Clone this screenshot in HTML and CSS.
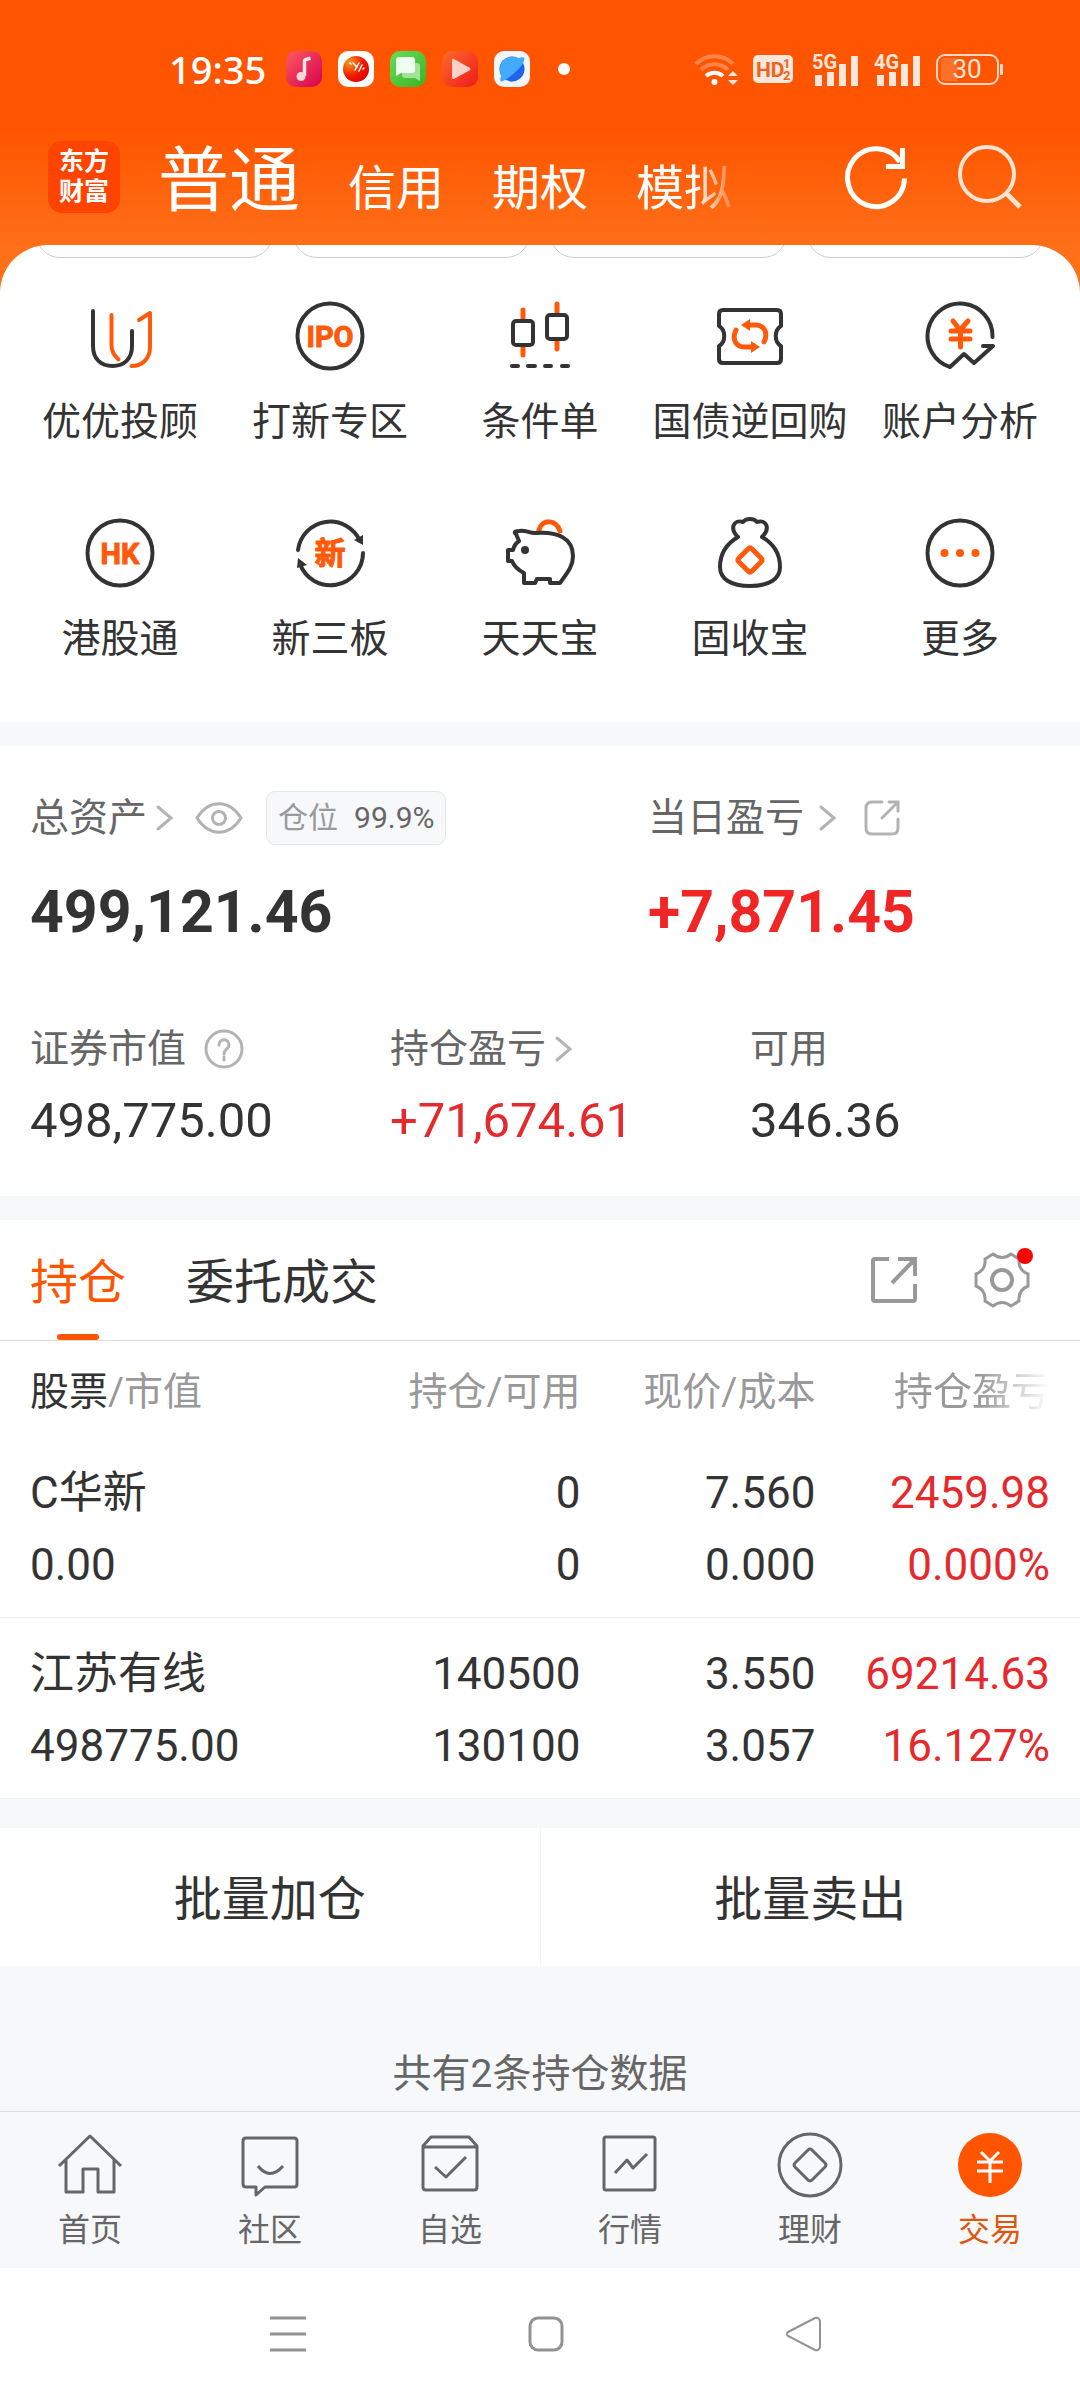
FILE: index.html
```html
<!DOCTYPE html>
<html lang="zh-CN">

<head>
    <meta charset="UTF-8" />
    <meta name="viewport" content="width=device-width, initial-scale=1" />
    <title>交易 - 东方财富</title>
    <link rel="stylesheet" href="styles.css">
</head>

<body>
    <header class="header">
        <div class="status-bar">
            <div class="status-left">
                <span class="clock">19:35</span>
                <svg class="app-icon" viewBox="0 0 36 36" aria-hidden="true">
                    <defs>
                        <linearGradient id="g-music" x1="0" y1="0" x2="1" y2="1"><stop offset="0" stop-color="#ff5a5f" /><stop offset="1" stop-color="#d4004f" /></linearGradient>
                        <radialGradient id="g-ball" cx=".25" cy=".25" r=".9"><stop offset="0" stop-color="#f39a1d" /><stop offset=".6" stop-color="#f01800" /><stop offset="1" stop-color="#e00000" /></radialGradient>
                        <linearGradient id="g-sms" x1="0" y1="0" x2="1" y2="1"><stop offset="0" stop-color="#66e056" /><stop offset="1" stop-color="#3cb125" /></linearGradient>
                        <linearGradient id="g-video" x1="0" y1="0" x2="1" y2="1"><stop offset="0" stop-color="#ff6a2c" /><stop offset="1" stop-color="#ee1a1a" /></linearGradient>
                    </defs>
                    <rect width="36" height="36" rx="10" fill="url(#g-music)" />
                    <path d="M18.500 25V10.500q0-2 2-2.300l4-.9" fill="none" stroke="#ffe3e6" stroke-width="3.500" />
                    <circle cx="15" cy="25.500" r="4.500" fill="#ffd5da" />
                </svg>
                <svg class="app-icon" viewBox="0 0 36 36" aria-hidden="true">
                    <rect width="36" height="36" rx="10" fill="#fff" />
                    <circle cx="18" cy="18" r="13" fill="url(#g-ball)" />
                    <path d="M12 12l1 1M15 12l4 4M17 19l4-7M21 20l3-6M25 18l1-1" stroke="#fff" stroke-width="1.500" stroke-linecap="round" />
                </svg>
                <svg class="app-icon" viewBox="0 0 36 36" aria-hidden="true">
                    <rect width="36" height="36" rx="10" fill="url(#g-sms)" />
                    <path d="M12 12h15q3 0 3 3v15l-5-3H15q-3 0-3-3z" fill="#a4e29a" />
                    <path d="M9 6h13q3 0 3 3v10q0 3-3 3H11l-5 3V9q0-3 3-3z" fill="#effff0" />
                </svg>
                <svg class="app-icon" viewBox="0 0 36 36" aria-hidden="true">
                    <rect width="36" height="36" rx="10" fill="url(#g-video)" />
                    <path d="M10 9.500q0-2.500 2.300-1.300l15.500 8.500q1.500 1.300 0 2.500l-15.500 8.500Q10 28.700 10 26z" fill="#ffd0c8" />
                </svg>
                <svg class="app-icon" viewBox="0 0 36 36" aria-hidden="true">
                    <rect width="36" height="36" rx="10" fill="#f2f6fb" />
                    <circle cx="18" cy="18" r="12.500" fill="#1f63ea" />
                    <path d="M9 26.500A12.500 12.500 0 0 1 24.500 7.300q5-2.300 6 .2-.5 6-9.500 14t-14 9q-2.500-1.500 2-8z" fill="#43aaff" />
                </svg>
                <span class="more-dot"></span>
            </div>
            <div class="status-right">
                <svg width="46" height="36" viewBox="0 0 46 36" fill="none" aria-hidden="true">
                    <path d="M2 13a26 26 0 0 1 37 0M7 19a19 19 0 0 1 27 0" stroke="#ff8447" stroke-width="4" />
                    <path d="M12 25a13 13 0 0 1 17 0" stroke="#fff" stroke-width="4" />
                    <circle cx="20.500" cy="31" r="3" fill="#fff" />
                    <path d="M34 25l5-5 5 5zM34 29l5 5 5-5z" fill="#ffe6da" />
                </svg>
                <svg class="hd-icon" width="40" height="30" viewBox="0 0 40 30" aria-hidden="true">
                    <rect y="1" width="40" height="28" rx="5" fill="#ffe6da" />
                    <text class="hd-text" x="3" y="23">HD</text>
                    <text class="hd-num" x="30" y="14">1</text>
                    <text class="hd-num" x="30" y="26">2</text>
                </svg>
                <svg width="46" height="36" viewBox="0 0 46 36" aria-hidden="true">
                    <text class="net-text" x="0" y="18">5G</text>
                    <path d="M3 24h7v11H3zM15 21h7v14h-7zM27 13h7v22h-7zM39 5h7v30h-7z" fill="#ffe6da" />
                </svg>
                <svg width="46" height="36" viewBox="0 0 46 36" aria-hidden="true">
                    <text class="net-text" x="0" y="18">4G</text>
                    <path d="M3 24h7v11H3zM15 21h7v14h-7zM27 13h7v22h-7zM39 5h7v30h-7z" fill="#ffe6da" />
                </svg>
                <svg width="68" height="36" viewBox="0 0 68 36" aria-hidden="true">
                    <rect x="1" y="4" width="61" height="29" rx="8" fill="none" stroke="#ffd8c4" stroke-width="2" />
                    <path d="M9 7h12v23H9q-4 0-4-4V11q0-4 4-4z" fill="#ff702a" />
                    <rect x="64" y="13" width="3" height="11" rx="1" fill="#ffd8c4" />
                    <text class="battery-text" x="31" y="27">30</text>
                </svg>
            </div>
        </div>

        <div class="title-bar">
            <div class="logo">东方<br>财富</div>
            <nav class="account-tabs">
                <a href="#" class="account-tab active">普通</a>
                <a href="#" class="account-tab">信用</a>
                <a href="#" class="account-tab">期权</a>
                <a href="#" class="account-tab fade">模拟</a>
            </nav>
            <div class="title-actions">
                <button class="icon-btn" aria-label="刷新">
                    <svg width="72" height="72" viewBox="0 0 72 72" fill="none" stroke="#fff" stroke-width="5">
                        <path d="M64.500 37.500A28.500 29 0 1 1 60 21" />
                        <path d="M46 25.500h16.500V7" />
                    </svg>
                </button>
                <button class="icon-btn" aria-label="搜索">
                    <svg width="72" height="72" viewBox="0 0 72 72" fill="none" stroke="#ffe3d3" stroke-width="4">
                        <circle cx="33" cy="33" r="27" />
                        <path d="M52 52l14 14" stroke-width="5" />
                    </svg>
                </button>
            </div>
        </div>
    </header>

    <main>
        <section class="shortcuts">
            <div class="pill-row"><span></span><span></span><span></span><span></span></div>
            <div class="shortcut-grid">
                <a href="#" class="shortcut">
                    <svg class="shortcut-icon" viewBox="0 0 72 72">
                        <path d="M9 11v35c0 13 8 20 19.500 20S48 59 48 46V31" />
                        <path class="hot" d="M27.500 15v30c0 7 3 11 7 14.500M55 20l11-7v34c0 12-8 19-18.500 19" />
                    </svg>
                    <span>优优投顾</span>
                </a>
                <a href="#" class="shortcut">
                    <svg class="shortcut-icon" viewBox="0 0 72 72">
                        <circle cx="36" cy="36" r="32.500" />
                        <text class="icon-text" x="36" y="47">IPO</text>
                    </svg>
                    <span>打新专区</span>
                </a>
                <a href="#" class="shortcut">
                    <svg class="shortcut-icon" viewBox="0 0 72 72">
                        <path class="hot" d="M19 10v8M19 48v7M53 4v8M53 42v7" stroke-width="5" />
                        <rect x="9" y="21" width="20" height="24" rx="3" />
                        <rect x="43" y="15" width="20" height="24" rx="3" />
                        <path d="M8 66h6M24 66h7M41 66h6M58 66h6" />
                    </svg>
                    <span>条件单</span>
                </a>
                <a href="#" class="shortcut">
                    <svg class="shortcut-icon" viewBox="0 0 72 72">
                        <path d="M9 10h54q4 0 4 4v12c-7 4-7 16 0 20v13q0 4-4 4H9q-4 0-4-4V46c7-4 7-16 0-20V14q0-4 4-4z" />
                        <path class="hot" d="M22 30c-5 10 1 17 8 17h7M50 42c5-10-1-17-8-17h-7" stroke-width="5" />
                        <path class="hot-fill" d="M36 19v12l-9-6zM37 41v12l9-6z" />
                    </svg>
                    <span>国债逆回购</span>
                </a>
                <a href="#" class="shortcut">
                    <svg class="shortcut-icon" viewBox="0 0 72 72">
                        <path d="M68.500 37A32.500 32.500 0 1 0 26 67l14-13 10 9 19-17H59" />
                        <path class="hot" d="M29 21l7 9 8-9M27 31h19M27 39h19M36.500 31v16" stroke-width="5" />
                    </svg>
                    <span>账户分析</span>
                </a>
                <a href="#" class="shortcut">
                    <svg class="shortcut-icon" viewBox="0 0 72 72">
                        <circle cx="36" cy="36" r="32.500" />
                        <text class="icon-text" x="36" y="47">HK</text>
                    </svg>
                    <span>港股通</span>
                </a>
                <a href="#" class="shortcut">
                    <svg class="shortcut-icon" viewBox="0 0 72 72">
                        <path d="M4 33A32.500 32.500 0 0 1 66 24M69 36A32.500 32.500 0 0 1 6 47" />
                        <path class="dark-fill" d="M60 23l9-5v10zM4 41l9 7-10 3z" />
                        <text class="icon-text cjk" x="36" y="47">新</text>
                    </svg>
                    <span>新三板</span>
                </a>
                <a href="#" class="shortcut">
                    <svg class="shortcut-icon" viewBox="0 0 72 72">
                        <path class="hot" d="M35 13c3-11 17-11 21 1" stroke-width="5" />
                        <path d="M12 17c-3-2 0-3 3-3 7-1 10 2 16 2 22-2 38 5 38 23 0 10-5 16-13 27H46v-4H33l-2 4H20V56C14 53 10 49 8 44H4V33h5c1-4 3-7 6-9z" />
                        <circle class="dark-fill" cx="21" cy="33" r="4" />
                    </svg>
                    <span>天天宝</span>
                </a>
                <a href="#" class="shortcut">
                    <svg class="shortcut-icon" viewBox="0 0 72 72">
                        <path d="M24 20c-9-9-4-18 5-15 3-4 11-4 14 0 9-3 14 6 5 15 12 7 18 17 18 30 0 12-11 19-30 19S6 62 6 50c0-13 6-23 18-30z" />
                        <path class="hot" d="M34 32q2-2 4 0l9 9q2 2 0 4l-9 9q-2 2-4 0l-9-9q-2-2 0-4z" stroke-width="5" />
                    </svg>
                    <span>固收宝</span>
                </a>
                <a href="#" class="shortcut">
                    <svg class="shortcut-icon" viewBox="0 0 72 72">
                        <circle cx="36" cy="36" r="32.500" />
                        <g class="hot-fill"><circle cx="20.500" cy="36" r="4" /><circle cx="36" cy="36" r="4" /><circle cx="51.500" cy="36" r="4" /></g>
                    </svg>
                    <span>更多</span>
                </a>
            </div>
        </section>

        <section class="assets">
            <div class="asset-main">
                <div class="asset-item">
                    <div class="asset-label">
                        <a href="#">总资产<svg class="chevron" viewBox="0 0 20 28"><path d="M3 3l13 11L3 25" /></svg></a>
                        <button class="icon-btn eye-btn" aria-label="隐藏金额">
                            <svg width="48" height="36" viewBox="0 0 48 36" class="line-icon">
                                <path d="M2 18C14-1 34-1 46 18 34 37 14 37 2 18z" />
                                <circle cx="24" cy="18" r="6.500" />
                            </svg>
                        </button>
                        <span class="badge"><span>仓位</span><b>99.9%</b></span>
                    </div>
                    <p class="asset-total">499,121.46</p>
                </div>
                <div class="asset-item">
                    <div class="asset-label">
                        <a href="#" class="spaced">当日盈亏<svg class="chevron" viewBox="0 0 20 28"><path d="M3 3l13 11L3 25" /></svg></a>
                        <button class="icon-btn share-btn" aria-label="分享当日盈亏">
                            <svg width="36" height="36" viewBox="0 0 36 36" class="line-icon">
                                <path d="M18 2H8Q2 2 2 8v20q0 6 6 6h20q6 0 6-6V19M25 2h9v9M34 2L18 18" />
                            </svg>
                        </button>
                    </div>
                    <p class="asset-total up">+7,871.45</p>
                </div>
            </div>
            <div class="asset-sub">
                <div class="asset-item">
                    <div class="asset-label">证券市值
                        <button class="icon-btn help-btn" aria-label="说明">
                            <svg width="40" height="40" viewBox="0 0 40 40" class="line-icon">
                                <circle cx="20" cy="20" r="18" />
                                <path d="M15 16c0-7 10-7 10 0 0 4-5 4-5 9M20 28v3" />
                            </svg>
                        </button>
                    </div>
                    <p class="asset-value">498,775.00</p>
                </div>
                <div class="asset-item">
                    <div class="asset-label"><a href="#">持仓盈亏<svg class="chevron" viewBox="0 0 20 28"><path d="M3 3l13 11L3 25" /></svg></a></div>
                    <p class="asset-value up">+71,674.61</p>
                </div>
                <div class="asset-item">
                    <div class="asset-label">可用</div>
                    <p class="asset-value">346.36</p>
                </div>
            </div>
        </section>

        <section class="positions">
            <div class="position-tabs">
                <button class="position-tab active">持仓</button>
                <button class="position-tab">委托成交</button>
                <div class="position-actions">
                    <button class="icon-btn" aria-label="分享持仓">
                        <svg width="48" height="48" viewBox="0 0 48 48" class="tool-icon">
                            <path d="M19 3H5Q3 3 3 5v38q0 2 2 2h38q2 0 2-2V28M28 3h17v17M45 3L22 27" />
                        </svg>
                    </button>
                    <button class="icon-btn gear-btn" aria-label="设置">
                        <svg width="56" height="56" viewBox="0 0 56 56" class="tool-icon thin">
                            <path d="M19 2q9 7 18 0l8 5q-1 11 9 15v12q-10 4-9 15l-8 5q-9-7-18 0l-8-5q1-11-9-15V22q10-4 9-15z" />
                            <circle cx="28" cy="28" r="10" stroke-width="4" />
                        </svg>
                        <span class="red-dot"></span>
                    </button>
                </div>
            </div>
            <table class="position-table">
                <thead>
                    <tr>
                        <th><b>股票</b>/市值</th>
                        <th>持仓/可用</th>
                        <th>现价/成本</th>
                        <th><span class="fade-text">持仓盈亏</span></th>
                    </tr>
                </thead>
                <tbody>
                    <tr>
                        <td>C华新<br>0.00</td>
                        <td>0<br>0</td>
                        <td>7.560<br>0.000</td>
                        <td class="up">2459.98<br>0.000%</td>
                    </tr>
                    <tr>
                        <td>江苏有线<br>498775.00</td>
                        <td>140500<br>130100</td>
                        <td>3.550<br>3.057</td>
                        <td class="up">69214.63<br>16.127%</td>
                    </tr>
                </tbody>
            </table>
        </section>

        <div class="batch">
            <button class="batch-btn">批量加仓</button>
            <button class="batch-btn">批量卖出</button>
        </div>

        <p class="summary">共有2条持仓数据</p>
    </main>

    <nav class="tab-bar">
        <a href="#" class="tab">
            <svg class="tab-icon" viewBox="0 0 66 66"><path d="M2 34L33 4l31 30M9 28v32h17V37h15v23h16V28" /></svg>
            <span>首页</span>
        </a>
        <a href="#" class="tab">
            <svg class="tab-icon" viewBox="0 0 66 66"><path d="M9 6h48q3 0 3 3v43q0 3-3 3H28l-9 8v-8H9q-3 0-3-3V9q0-3 3-3zM21 34q12 15 25 0" /></svg>
            <span>社区</span>
        </a>
        <a href="#" class="tab">
            <svg class="tab-icon" viewBox="0 0 66 66"><path d="M14 5h38l8 9v41q0 3-3 3H9q-3 0-3-3V14zM6 15h54M18 35l11 10 20-20" /></svg>
            <span>自选</span>
        </a>
        <a href="#" class="tab">
            <svg class="tab-icon" viewBox="0 0 66 66"><rect x="7" y="5" width="51" height="53" rx="2" /><path d="M18 41l12-13 6 8 14-14" /></svg>
            <span>行情</span>
        </a>
        <a href="#" class="tab">
            <svg class="tab-icon" viewBox="0 0 66 66"><circle cx="33" cy="33" r="31" /><path d="M31 18q2-2 4 0l13 13q2 2 0 4L35 48q-2 2-4 0L18 35q-2-2 0-4z" /></svg>
            <span>理财</span>
        </a>
        <a href="#" class="tab active">
            <svg class="tab-icon" viewBox="0 0 66 66"><circle class="disc" cx="33" cy="33" r="32" /><path class="yen" d="M24 20l9 9 9-9M20 30h26M20 39h26M33 29v22" /></svg>
            <span>交易</span>
        </a>
    </nav>

    <div class="system-nav">
        <button class="icon-btn" aria-label="最近任务"><svg width="36" height="36" viewBox="0 0 36 36" class="nav-icon"><path d="M1 2h34M1 18h34M1 34h34" /></svg></button>
        <button class="icon-btn" aria-label="主屏幕"><svg width="36" height="36" viewBox="0 0 36 36" class="nav-icon"><rect x="2" y="2" width="32" height="32" rx="8" /></svg></button>
        <button class="icon-btn" aria-label="返回"><svg width="36" height="36" viewBox="0 0 36 36" class="nav-icon thin"><path d="M2 16L29 2q4-1 5 3v26q-1 4-5 3L2 20q-2-2 0-4z" /></svg></button>
    </div>
</body>

</html>
```

FILE: styles.css
```css
/* Reset */

* {
    margin: 0;
    padding: 0;
    box-sizing: border-box;
}

body {
    font-family: Roboto, 'Noto Sans CJK SC', sans-serif;
    background: #f7f8fa;
    color: #333333;
    font-size: 39px;
    line-height: 56px;
    min-height: 100vh;
    display: flex;
    flex-direction: column;
}

a {
    color: inherit;
    text-decoration: none;
}

button {
    background: none;
    border: none;
    font: inherit;
    color: inherit;
    cursor: pointer;
}

svg {
    display: block;
    flex: none;
}

main {
    flex: 1;
}

.icon-btn {
    display: flex;
}

.up {
    color: #e5292c;
}

/* Header */

.header {
    background: linear-gradient(#ff5500 130px, #ff7019 250px);
    padding: 50px 48px 80px;
    margin-bottom: -48px;
}

.status-bar {
    display: flex;
    justify-content: space-between;
    align-items: center;
    height: 38px;
    padding: 0 28px 0 121px;
}

.status-left {
    display: flex;
    align-items: center;
    gap: 16px;
}

.clock {
    font-family: 'Noto Sans', sans-serif;
    font-size: 38px;
    font-weight: 500;
    line-height: 38px;
    color: #ffffff;
    margin-right: 4px;
}

.app-icon {
    width: 36px;
    height: 36px;
}

.more-dot {
    width: 12px;
    height: 12px;
    margin-left: 12px;
    border-radius: 50%;
    background: #ffffff;
}

.status-right {
    display: flex;
    align-items: center;
    gap: 16px;
}

.hd-icon {
    margin: 0 3px 0 -3px;
}

.hd-text {
    font-size: 21px;
    font-weight: 700;
    fill: #e8641f;
}

.hd-num {
    font-size: 13px;
    font-weight: 700;
    fill: #e8641f;
}

.net-text {
    font-size: 20px;
    font-weight: 700;
    fill: #ffe6da;
}

.battery-text {
    font-size: 26px;
    fill: #ffe6da;
    text-anchor: middle;
}

.title-bar {
    display: flex;
    align-items: center;
    height: 72px;
    margin-top: 53px;
}

.logo {
    width: 72px;
    height: 72px;
    padding-top: 6px;
    border-radius: 14px;
    background: #ff4400;
    color: #ffffff;
    font-size: 25px;
    font-weight: 700;
    line-height: 30px;
    text-align: center;
}

.account-tabs {
    display: flex;
    align-items: baseline;
    gap: 48px;
    margin-left: 38px;
    padding-top: 16px;
    color: #ffffff;
}

.account-tab {
    font-size: 48px;
    line-height: 72px;
}

.account-tab.active {
    font-size: 71px;
}

.account-tab.fade {
    -webkit-mask-image: linear-gradient(90deg, #000 60%, transparent 110%);
    mask-image: linear-gradient(90deg, #000 60%, transparent 110%);
}

.title-actions {
    display: flex;
    gap: 42px;
    margin-left: auto;
    margin-right: 6px;
}

/* Shortcuts */

.shortcuts {
    background: #ffffff;
    border-radius: 48px 48px 0 0;
    padding: 0 15px 55px;
    overflow: hidden;
}

.pill-row {
    display: flex;
    align-items: flex-end;
    gap: 20px;
    height: 13px;
    padding: 0 21px;
}

.pill-row span {
    flex: 1;
    height: 60px;
    border: 1px solid #cccccc;
    border-radius: 24px;
}

.shortcut-grid {
    display: grid;
    grid-template-columns: repeat(5, 1fr);
    row-gap: 67px;
    padding-top: 42px;
}

.shortcut {
    display: flex;
    flex-direction: column;
    align-items: center;
    gap: 22px;
    white-space: nowrap;
}

.shortcut-icon {
    width: 72px;
    height: 72px;
    fill: none;
    stroke: #333333;
    stroke-width: 4;
    stroke-linecap: round;
    stroke-linejoin: round;
}

.shortcut-icon .hot {
    stroke: #ff5a0a;
}

.shortcut-icon .hot-fill {
    fill: #ff5a0a;
    stroke: none;
}

.shortcut-icon .dark-fill {
    fill: #333333;
    stroke: none;
}

.icon-text {
    font-size: 29px;
    font-weight: 700;
    fill: #ff5a0a;
    stroke: #ff5a0a;
    stroke-width: 1;
    text-anchor: middle;
}

.icon-text.cjk {
    font-size: 31px;
}

/* Assets */

.assets {
    background: #ffffff;
    margin-top: 24px;
    padding: 44px 30px 45px;
}

.asset-main {
    display: grid;
    grid-template-columns: 618px 1fr;
}

.asset-sub {
    display: grid;
    grid-template-columns: repeat(3, 1fr);
    column-gap: 30px;
    margin-right: -30px;
    margin-top: 73px;
}

.asset-label {
    display: flex;
    align-items: center;
    height: 56px;
    color: #666666;
    white-space: nowrap;
}

.asset-label a {
    display: flex;
    align-items: center;
    gap: 8px;
}

.asset-label a.spaced {
    gap: 14px;
}

.chevron {
    width: 20px;
    height: 28px;
    fill: none;
    stroke: #b3b3b3;
    stroke-width: 3;
    stroke-linecap: round;
}

.line-icon {
    fill: none;
    stroke: #b3b3b3;
    stroke-width: 3;
    stroke-linecap: round;
}

.eye-btn {
    margin-left: 20px;
}

.share-btn {
    margin-left: 26px;
}

.help-btn {
    margin-left: 18px;
}

.badge {
    display: flex;
    align-items: center;
    gap: 16px;
    height: 54px;
    margin-left: 23px;
    padding: 0 11px;
    border: 1px solid #e5e6e8;
    border-radius: 9px;
    background: #f7f8fa;
    color: #999999;
    font-size: 30px;
}

.badge b {
    font-weight: 400;
    color: #666666;
}

.asset-total {
    font-size: 59px;
    font-weight: 700;
    line-height: 72px;
    margin-top: 30px;
}

.asset-total.up {
    color: #f02626;
}

.asset-value {
    font-size: 49px;
    line-height: 60px;
    margin-top: 14px;
}

/* Positions */

.positions {
    background: #ffffff;
    margin-top: 24px;
}

.position-tabs {
    display: flex;
    align-items: center;
    gap: 60px;
    height: 121px;
    padding: 0 50px 0 30px;
    border-bottom: 1px solid #dddddd;
}

.position-tab {
    position: relative;
    height: 120px;
    padding-top: 5px;
    font-size: 48px;
}

.position-tab.active {
    color: #ff5500;
}

.position-tab.active::after {
    content: '';
    position: absolute;
    left: 50%;
    bottom: 0;
    width: 42px;
    height: 6px;
    margin-left: -21px;
    border-radius: 3px;
    background: #ff5500;
}

.position-actions {
    display: flex;
    align-items: center;
    gap: 56px;
    margin-left: auto;
}

.tool-icon {
    fill: none;
    stroke: #999999;
    stroke-width: 4;
}

.tool-icon.thin {
    stroke-width: 3;
}

.gear-btn {
    position: relative;
}

.red-dot {
    position: absolute;
    top: -4px;
    right: -3px;
    width: 16px;
    height: 16px;
    border-radius: 50%;
    background: #ff0000;
}

.position-table {
    width: 100%;
    table-layout: fixed;
    border-collapse: collapse;
}

.position-table th,
.position-table td {
    text-align: right;
    font-weight: 400;
    white-space: nowrap;
}

.position-table th {
    height: 96px;
    padding-top: 5px;
    color: #999999;
}

.position-table th b {
    font-weight: 400;
    color: #333333;
}

.position-table td {
    padding: 20px 0 16px;
    border-bottom: 1px solid #eeeeee;
    font-size: 44px;
    line-height: 72px;
}

.position-table th:first-child,
.position-table td:first-child {
    width: 32%;
    padding-left: 30px;
    text-align: left;
}

.position-table th:last-child,
.position-table td:last-child {
    width: 24.5%;
    padding-right: 30px;
}

.fade-text {
    -webkit-mask-image: linear-gradient(90deg, #000 55%, transparent);
    mask-image: linear-gradient(90deg, #000 55%, transparent);
}

/* Batch actions */

.batch {
    display: flex;
    margin-top: 29px;
    background: #ffffff;
}

.batch-btn {
    flex: 1;
    height: 138px;
    padding-top: 5px;
    font-size: 48px;
}

.batch-btn + .batch-btn {
    border-left: 1px solid #f5f5f5;
}

.summary {
    padding: 80px 0 9px;
    color: #666666;
    text-align: center;
}

/* Tab bar */

.tab-bar {
    display: flex;
    height: 157px;
    padding-top: 20px;
    border-top: 1px solid #dddddd;
    background: #f7f8fa;
}

.tab {
    flex: 1;
    display: flex;
    flex-direction: column;
    align-items: center;
    gap: 10px;
    color: #666666;
    font-size: 32px;
    line-height: 44px;
}

.tab.active {
    color: #e0560f;
}

.tab-icon {
    width: 66px;
    height: 66px;
    fill: none;
    stroke: #666666;
    stroke-width: 3;
    stroke-linejoin: round;
}

.tab-icon .disc {
    fill: #ff5500;
    stroke: none;
}

.tab-icon .yen {
    stroke: #ffffff;
}

/* System navigation */

.system-nav {
    display: flex;
    justify-content: center;
    align-items: center;
    gap: 222px;
    height: 132px;
    padding-left: 12px;
    background: #ffffff;
}

.nav-icon {
    fill: none;
    stroke: #929292;
    stroke-width: 3;
    stroke-linecap: round;
}

.nav-icon.thin {
    stroke-width: 2;
}
```
